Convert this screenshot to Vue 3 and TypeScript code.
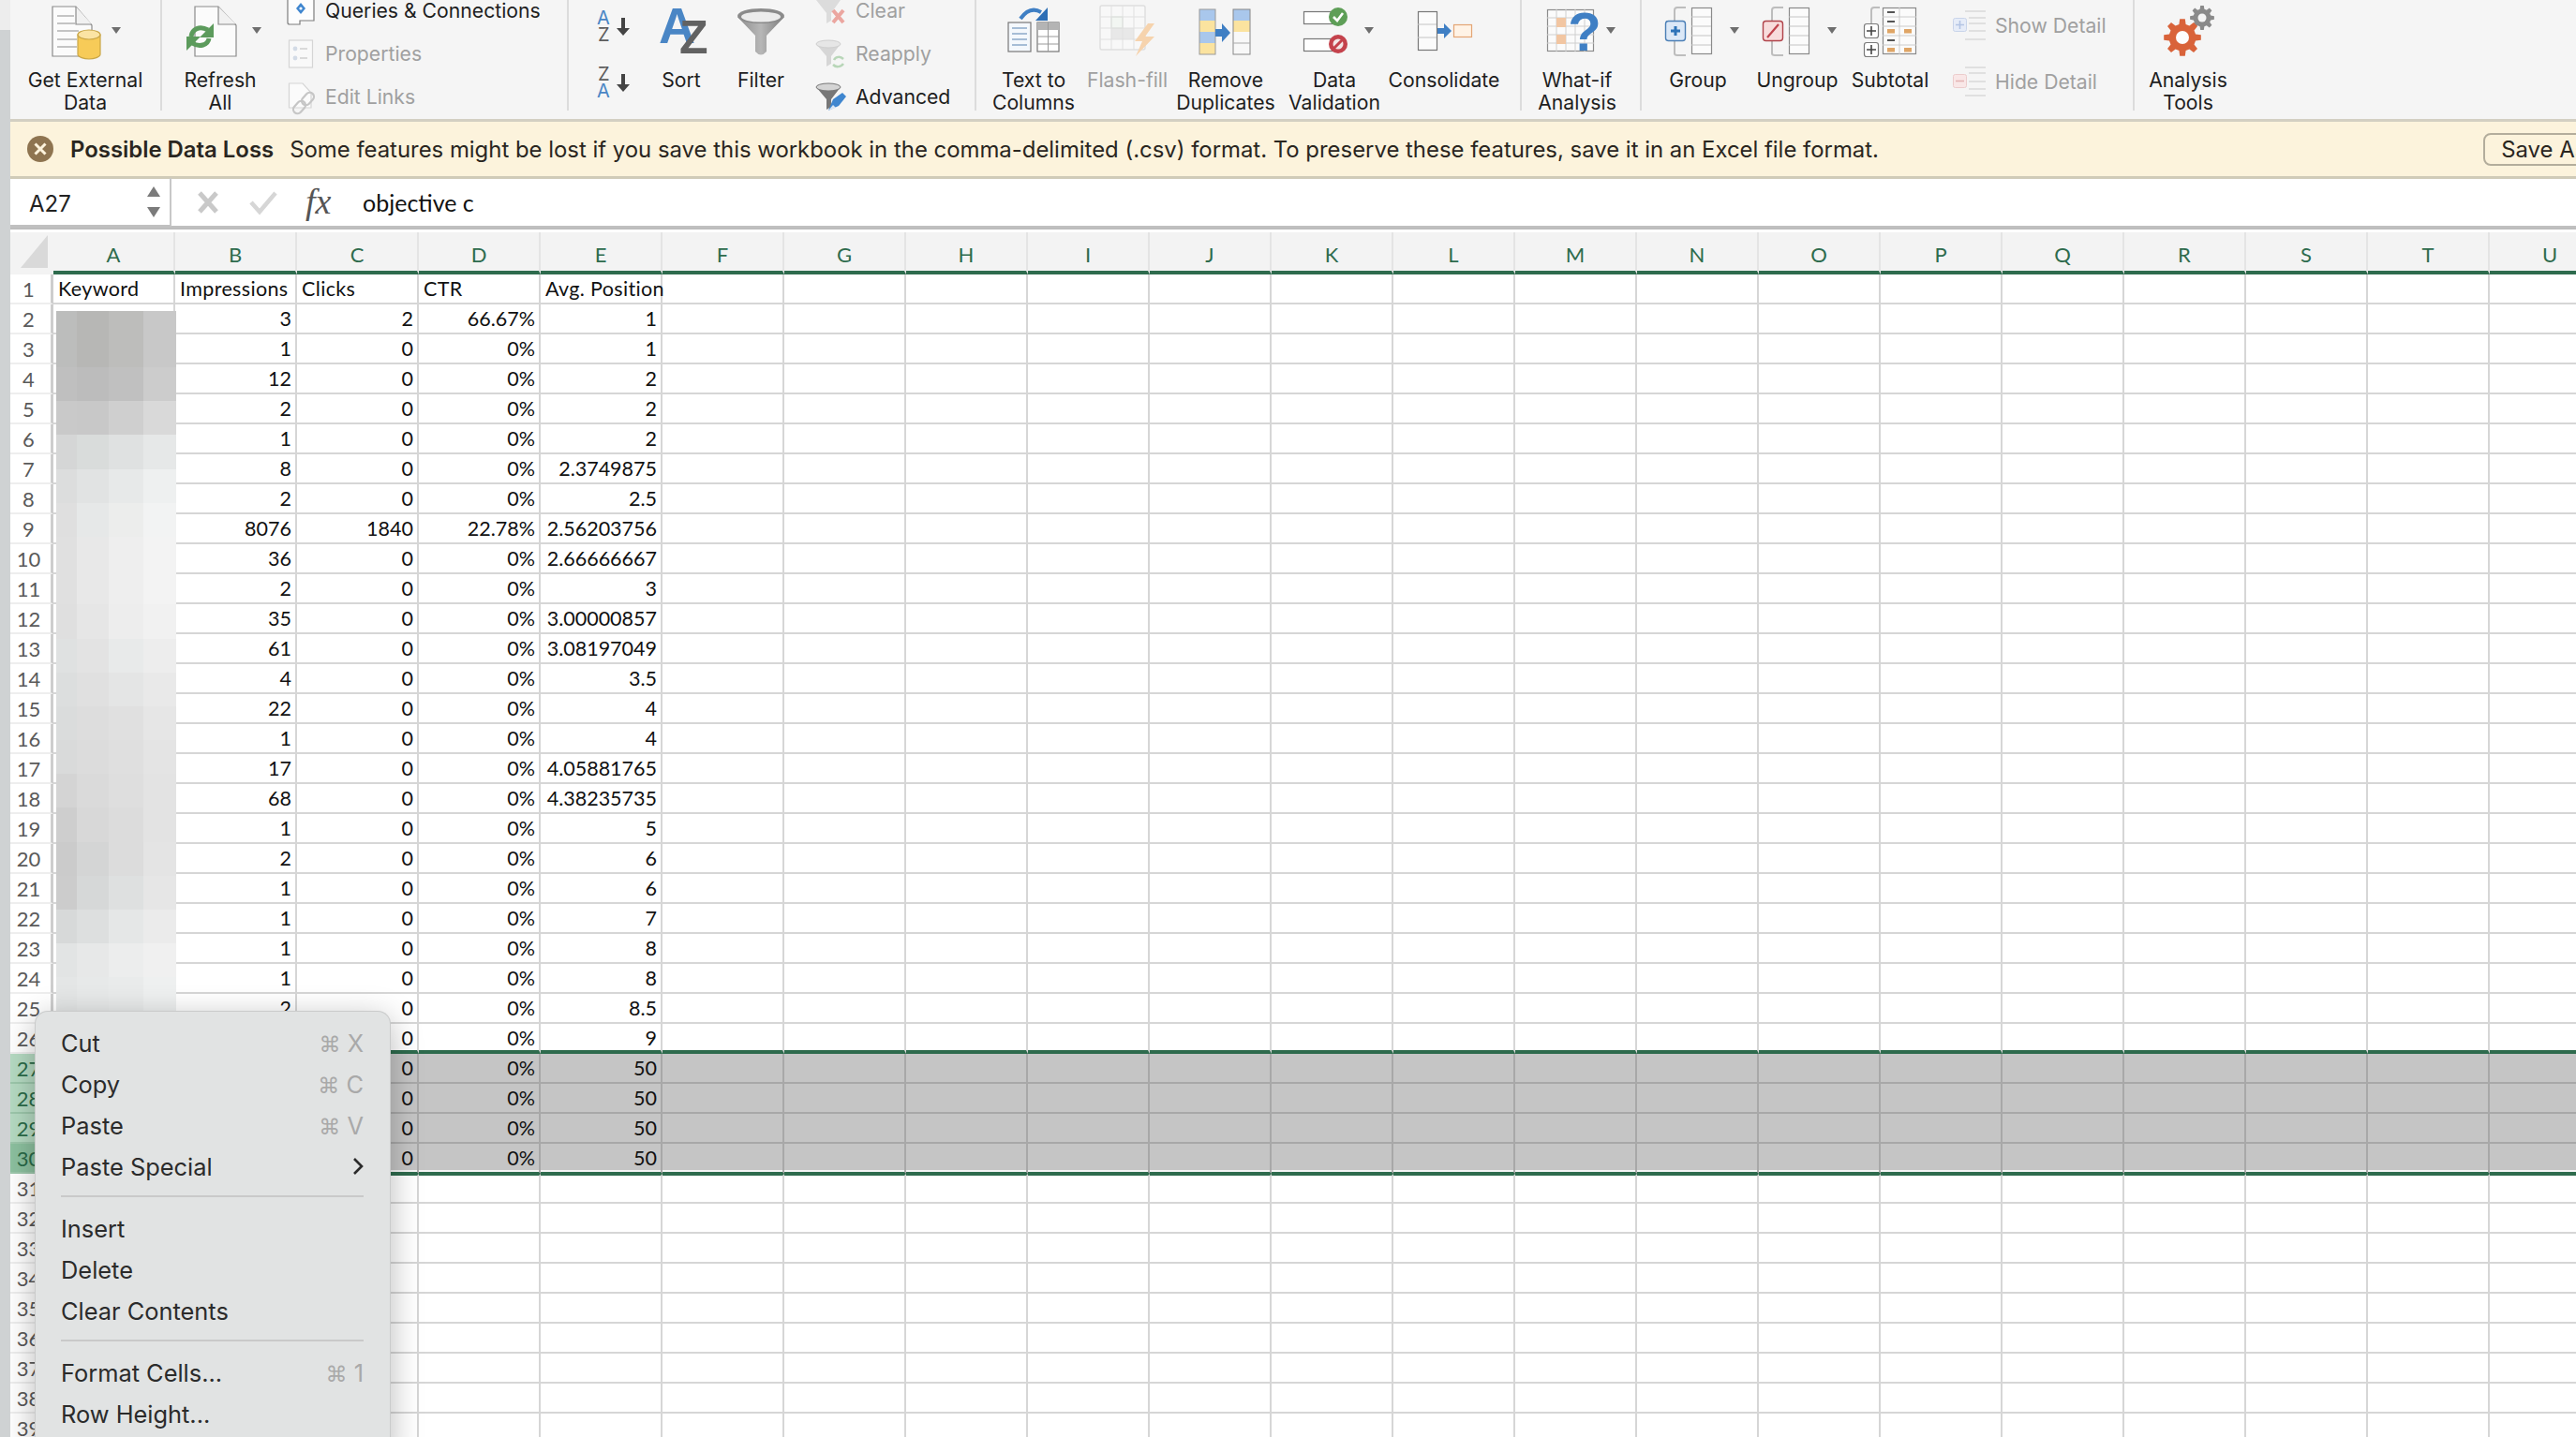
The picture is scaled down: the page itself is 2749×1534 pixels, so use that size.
<script setup lang="ts">
type Row = { n: number; cells: string[] };

const data: string[][] = [
  ['Keyword', 'Impressions', 'Clicks', 'CTR', 'Avg. Position'],
  ['', '3', '2', '66.67%', '1'],
  ['', '1', '0', '0%', '1'],
  ['', '12', '0', '0%', '2'],
  ['', '2', '0', '0%', '2'],
  ['', '1', '0', '0%', '2'],
  ['', '8', '0', '0%', '2.3749875'],
  ['', '2', '0', '0%', '2.5'],
  ['', '8076', '1840', '22.78%', '2.56203756'],
  ['', '36', '0', '0%', '2.66666667'],
  ['', '2', '0', '0%', '3'],
  ['', '35', '0', '0%', '3.00000857'],
  ['', '61', '0', '0%', '3.08197049'],
  ['', '4', '0', '0%', '3.5'],
  ['', '22', '0', '0%', '4'],
  ['', '1', '0', '0%', '4'],
  ['', '17', '0', '0%', '4.05881765'],
  ['', '68', '0', '0%', '4.38235735'],
  ['', '1', '0', '0%', '5'],
  ['', '2', '0', '0%', '6'],
  ['', '1', '0', '0%', '6'],
  ['', '1', '0', '0%', '7'],
  ['', '1', '0', '0%', '8'],
  ['', '1', '0', '0%', '8'],
  ['', '2', '0', '0%', '8.5'],
  ['', '1', '0', '0%', '9'],
  ['', '1', '0', '0%', '50'],
  ['', '1', '0', '0%', '50'],
  ['', '1', '0', '0%', '50'],
  ['', '1', '0', '0%', '50'],
];

const letters = 'ABCDEFGHIJKLMNOPQRSTU'.split('');

const rows: Row[] = Array.from({ length: 39 }, (_, i) => ({
  n: i + 1,
  cells: letters.map((_, c) => (data[i] ? data[i][c] ?? '' : '')),
}));

const blur: string[][] = [
  ['#bcbdbc', '#b7b7b5', '#bdbdbb', '#c8c8c8'],
  ['#bfbfbf', '#bcbcbc', '#c0c0c0', '#cccccc'],
  ['#c9c9c9', '#c8c8c8', '#cfcfcf', '#d9d9d9'],
  ['#d5d6d6', '#d9dcdb', '#dfe1e1', '#e6e8e8'],
  ['#dcdddd', '#e1e3e3', '#e7e9e9', '#eef0f0'],
  ['#dfdfdf', '#e6e8e8', '#ecedec', '#f2f3f3'],
  ['#e0e0e0', '#e8e8e8', '#eeeeee', '#f3f3f3'],
  ['#e0e0e0', '#e8e8e8', '#eeeeee', '#f3f3f3'],
  ['#dfdfdf', '#e6e6e6', '#ededed', '#f1f1f1'],
  ['#dfe1e1', '#e3e3e3', '#e8eaea', '#ededed'],
  ['#dcdede', '#e0e0e0', '#e4e5e5', '#e9e9e9'],
  ['#dadcdc', '#dddddd', '#e0e0e0', '#e6e6e6'],
  ['#d9dada', '#dcdcdc', '#dfdfdf', '#e4e4e4'],
  ['#d4d4d4', '#dadada', '#dedede', '#e3e3e3'],
  ['#cecece', '#d8d8d8', '#dcdcdc', '#e3e3e3'],
  ['#cbcbcb', '#d4d5d5', '#dcdcdc', '#e4e4e4'],
  ['#cccccc', '#d6d8d8', '#dee0e0', '#e6e6e6'],
  ['#d7d9d9', '#dddfdf', '#e5e7e7', '#ebebeb'],
  ['#e2e4e4', '#e7e8e8', '#eceded', '#f0f0f0'],
  ['#e4e6e6', '#e7e9e9', '#e9ebeb', '#eef0f0'],
];

type MenuItem = { label?: string; key?: string; arrow?: boolean; sep?: boolean };
const menu: MenuItem[] = [
  { label: 'Cut', key: 'X' },
  { label: 'Copy', key: 'C' },
  { label: 'Paste', key: 'V' },
  { label: 'Paste Special', arrow: true },
  { sep: true },
  { label: 'Insert' },
  { label: 'Delete' },
  { label: 'Clear Contents' },
  { sep: true },
  { label: 'Format Cells...', key: '1' },
  { label: 'Row Height...' },
];

function gear(cx: number, cy: number, ro: number, ri: number, n: number): string {
  const pts: string[] = [];
  const step = (Math.PI * 2) / n;
  for (let i = 0; i < n; i++) {
    const a = i * step - Math.PI / 2;
    const w = step * 0.2;
    const p = (r: number, t: number) => `${(cx + r * Math.cos(t)).toFixed(1)} ${(cy + r * Math.sin(t)).toFixed(1)}`;
    pts.push(p(ri, a - step * 0.32), p(ro, a - w * 0.9), p(ro, a + w * 0.9), p(ri, a + step * 0.32));
  }
  return 'M' + pts.join('L') + 'Z';
}
const gearBig = gear(2329, 40, 20, 14.5, 8);
const gearSmall = gear(2350, 19, 13, 9.5, 8);
</script>

<template>
  <div class="page">
    <div class="main">
      <!-- ribbon -->
      <div class="ribbon">
        <div class="btn w160">
          <svg class="ico" width="160" height="72" viewBox="11 0 160 72">
            <path d="M56 7H81L98 27V60H56Z" fill="#fbfbfb" stroke="#8b8b8b" stroke-width="1.2" />
            <path d="M81 7V26H98" fill="#f1f1f1" stroke="#8b8b8b" stroke-width="1.2" />
            <g stroke="#c4c4c4" stroke-width="2"><path d="M61 17H79M61 25H80M61 33H84M61 42H82M61 50H82" /></g>
            <path d="M83 37V58C83 61 90 63 95 63S107 61 107 58V37Z" fill="#f7cb58" stroke="#c9a647" stroke-width="1.2" />
            <ellipse cx="95" cy="37" rx="12" ry="5" fill="#fbe4a4" stroke="#c9a647" stroke-width="1.2" />
            <path d="M119 29H129L124 36Z" fill="#6e6e6e" />
          </svg>
          <div class="lbl">Get External<br />Data</div>
        </div>
        <div class="sep"></div>
        <div class="btn w124">
          <svg class="ico" width="124" height="72" viewBox="173 0 124 72">
            <path d="M208 7H233L252 27V60H208Z" fill="#fbfbfb" stroke="#8b8b8b" stroke-width="1.2" />
            <path d="M233 7V26H252" fill="#f1f1f1" stroke="#8b8b8b" stroke-width="1.2" />
            <path d="M204 39C205 31 213 27 222 32" fill="none" stroke="#5c9b5c" stroke-width="5" />
            <path d="M228 25V40H213Z" fill="#5c9b5c" />
            <path d="M223 41C222 48 213 51 205 46" fill="none" stroke="#5c9b5c" stroke-width="5" />
            <path d="M199 54V39H214Z" fill="#5c9b5c" />
            <path d="M269 29H279L274 36Z" fill="#6e6e6e" />
          </svg>
          <div class="lbl">Refresh<br />All</div>
        </div>
        <div class="small w308">
          <div class="srow">
            <svg width="41" height="46" viewBox="306 -12 41 46">
              <path d="M307 -6H335V22H320V26H309Q307 26 307 24Z" fill="#fdfdfd" stroke="#7d7d7d" stroke-width="1.2" />
              <path d="M321 3L326 9L321 15L316 9Z" fill="#3f86cf" />
              <circle cx="321" cy="9" r="1.6" fill="#fff" />
            </svg>
            <span>Queries &amp; Connections</span>
          </div>
          <div class="srow off">
            <svg width="41" height="46" viewBox="306 34 41 46">
              <rect x="308.5" y="43" width="25" height="29" fill="#f9f9f9" stroke="#d5d5d5" stroke-width="1.2" />
              <g fill="#d3dbe6"><circle cx="315" cy="52" r="2.4" /><circle cx="315" cy="62" r="2.4" /></g>
              <path d="M320 52H328M320 62H328" stroke="#cfcfcf" stroke-width="1.6" />
            </svg>
            <span>Properties</span>
          </div>
          <div class="srow off">
            <svg width="41" height="46" viewBox="306 80 41 46">
              <path d="M308.5 89H323L332 99V115H308.5Z" fill="#fbfbfb" stroke="#d5d5d5" stroke-width="1.2" />
              <g fill="none" stroke="#c6c6c6" stroke-width="2.2">
                <rect x="315" y="107" width="9" height="15" rx="4.5" transform="rotate(42 319.500 114.500)" />
                <rect x="324" y="98" width="9" height="15" rx="4.5" transform="rotate(42 328.500 105.500)" />
              </g>
            </svg>
            <span>Edit Links</span>
          </div>
        </div>
        <div class="sep"></div>
        <svg class="azcol" width="72" height="118" viewBox="607 0 72 118">
          <text x="637" y="26" class="az blue">A</text>
          <text x="638" y="44" class="az dark">Z</text>
          <path d="M663 19H667V30H672L665 38L658 30H663Z" fill="#444" />
          <text x="638" y="86" class="az dark">Z</text>
          <text x="637" y="104" class="az blue">A</text>
          <path d="M663 79H667V90H672L665 98L658 90H663Z" fill="#444" />
        </svg>
        <div class="btn w96">
          <svg class="ico" width="96" height="72" viewBox="679 0 96 72">
            <text x="703" y="46" class="sortA">A</text>
            <text x="725" y="57" class="sortZ">Z</text>
          </svg>
          <div class="lbl">Sort</div>
        </div>
        <div class="btn w74">
          <svg class="ico" width="74" height="72" viewBox="775 0 74 72">
            <defs>
              <linearGradient id="fun" x1="0" x2="1" y1="0" y2="0">
                <stop offset="0" stop-color="#8d8d8d" />
                <stop offset="0.5" stop-color="#b7b7b7" />
                <stop offset="1" stop-color="#7b7b7b" />
              </linearGradient>
            </defs>
            <path d="M787 18L806 38V55Q812 62 818 55V38L837 18Z" fill="url(#fun)" />
            <ellipse cx="812" cy="17" rx="25" ry="8" fill="#8b8b8b" />
            <ellipse cx="812" cy="18" rx="21" ry="5.5" fill="#ececec" />
          </svg>
          <div class="lbl">Filter</div>
        </div>
        <div class="small w191">
          <div class="srow off">
            <svg width="45" height="46" viewBox="868 -12 45 46">
              <path d="M871 0L882 14V25L887 22V14L897 0Z" fill="#dcdcdc" />
              <path d="M889 11L900 24M900 11L889 24" stroke="#eba6a0" stroke-width="4" />
            </svg>
            <span>Clear</span>
          </div>
          <div class="srow off">
            <svg width="45" height="46" viewBox="868 34 45 46">
              <path d="M871 47L882 60V71L887 68V60L897 47Z" fill="#d6d6d6" />
              <ellipse cx="884" cy="47" rx="13" ry="4" fill="#e6e6e6" stroke="#cfcfcf" />
              <path d="M890 64C892 60 897 60 900 63M900 68C897 72 892 72 889 69" fill="none" stroke="#b8d6b8" stroke-width="2.5" />
            </svg>
            <span>Reapply</span>
          </div>
          <div class="srow">
            <svg width="45" height="46" viewBox="868 80 45 46">
              <path d="M871 93L882 106V117L887 114V106L897 93Z" fill="#777" />
              <ellipse cx="884" cy="93" rx="13" ry="4" fill="#d4d4d4" stroke="#777" />
              <path d="M884 118L889 106L899 99L903 103L895 113Z" fill="#3f86cf" />
              <path d="M884 118L889 112L892 115Z" fill="#dbe6f3" />
            </svg>
            <span>Advanced</span>
          </div>
        </div>
        <div class="sep"></div>
        <div class="btn w122">
          <svg class="ico" width="122" height="72" viewBox="1042 0 122 72">
            <path d="M1089 20Q1099 6 1111 13" fill="none" stroke="#3f7fc4" stroke-width="4" />
            <path d="M1118 8V22H1105Z" fill="#2e6fb5" />
            <rect x="1076" y="24" width="24" height="31" fill="#f4f8fc" stroke="#777" stroke-width="1.2" />
            <path d="M1080 30H1096M1080 36H1096M1080 42H1096M1080 48H1096" stroke="#a6bdd6" stroke-width="2" />
            <rect x="1107" y="24" width="23" height="31" fill="#fff" stroke="#777" stroke-width="1.2" />
            <rect x="1107" y="24" width="23" height="8" fill="#b4b4b4" />
            <path d="M1107 39H1130M1107 47H1130M1118.500 24V55" stroke="#999" />
          </svg>
          <div class="lbl">Text to<br />Columns</div>
        </div>
        <div class="btn w78">
          <svg class="ico" width="78" height="72" viewBox="1164 0 78 72">
            <rect x="1174" y="6" width="48" height="47" rx="2" fill="#f8f8f8" stroke="#dedede" stroke-width="1.4" />
            <rect x="1186" y="30" width="24" height="12" fill="#e8e8e8" />
            <rect x="1186" y="18" width="12" height="12" fill="#f2f6f2" stroke="#d8e2d8" />
            <path d="M1186 6V53M1198 6V53M1210 6V53M1174 18H1222M1174 30H1222M1174 42H1222" stroke="#e0e0e0" fill="none" />
            <path d="M1225 25L1211 44H1219L1212 60L1232 39H1222L1232 25Z" fill="#f6d3ad" />
          </svg>
          <div class="lbl off">Flash-fill</div>
        </div>
        <div class="btn w132">
          <svg class="ico" width="132" height="72" viewBox="1242 0 132 72">
            <rect x="1280" y="10" width="17" height="12" fill="#a9c7ec" />
            <rect x="1280" y="22" width="17" height="12" fill="#fbe39f" />
            <rect x="1280" y="34" width="17" height="12" fill="#a9c7ec" />
            <rect x="1280" y="46" width="17" height="12" fill="#fbe39f" />
            <rect x="1280" y="10" width="17" height="48" fill="none" stroke="#9a9a9a" />
            <rect x="1316" y="10" width="18" height="12" fill="#a9c7ec" />
            <rect x="1316" y="22" width="18" height="12" fill="#fbe39f" />
            <rect x="1316" y="34" width="18" height="12" fill="#f8f8f8" />
            <rect x="1316" y="46" width="18" height="12" fill="#f8f8f8" />
            <rect x="1316" y="10" width="18" height="48" fill="none" stroke="#888" />
            <path d="M1316 46H1334" stroke="#aaa" />
            <path d="M1297 31H1304V25L1313 35L1304 45V39H1297Z" fill="#3f7fc4" />
          </svg>
          <div class="lbl">Remove<br />Duplicates</div>
        </div>
        <div class="btn w100">
          <svg class="ico" width="100" height="72" viewBox="1374 0 100 72">
            <rect x="1391.500" y="12.500" width="32" height="13" fill="#fff" stroke="#777" stroke-width="1.2" />
            <rect x="1391.500" y="41.500" width="32" height="13" fill="#fff" stroke="#777" stroke-width="1.2" />
            <circle cx="1428" cy="18" r="10" fill="#5e9e57" />
            <path d="M1423 18L1427 22L1433 14" fill="none" stroke="#fff" stroke-width="2.6" />
            <circle cx="1428" cy="47" r="10" fill="#c4424c" />
            <circle cx="1428" cy="47" r="5.500" fill="#f3e6e6" />
            <path d="M1423 52L1433 42" stroke="#c4424c" stroke-width="3" />
            <path d="M1456 29H1466L1461 36Z" fill="#6e6e6e" />
          </svg>
          <div class="lbl">Data<br />Validation</div>
        </div>
        <div class="btn w134">
          <svg class="ico" width="134" height="72" viewBox="1474 0 134 72">
            <rect x="1513.500" y="12.500" width="20" height="41" fill="#fbfbfb" stroke="#777" stroke-width="1.2" />
            <path d="M1513 26H1533M1513 40H1533" stroke="#c4c4c4" />
            <path d="M1534 30H1541V25L1549 33L1541 41V36H1534Z" fill="#3f7fc4" />
            <rect x="1551.500" y="26.500" width="19" height="13" fill="#fff3e6" stroke="#e3a574" stroke-width="1.2" />
          </svg>
          <div class="lbl">Consolidate</div>
        </div>
        <div class="sep mlsep"></div>
        <div class="btn w118">
          <svg class="ico" width="118" height="72" viewBox="1624 0 118 72">
            <rect x="1651.500" y="10.500" width="49" height="44" fill="#fbfbfb" stroke="#8c8c8c" stroke-width="1.2" />
            <path d="M1661 10V55M1671 10V55M1681 10V55M1691 10V55M1651 19H1701M1651 28H1701M1651 37H1701M1651 46H1701" stroke="#cfcfcf" />
            <rect x="1661" y="19" width="10" height="10" fill="#f2c6a2" />
            <rect x="1661" y="37" width="10" height="10" fill="#f2c6a2" />
            <text x="1691" y="54" class="qmark">?</text>
            <path d="M1714 29H1724L1719 36Z" fill="#6e6e6e" />
          </svg>
          <div class="lbl">What-if<br />Analysis</div>
        </div>
        <div class="sep mlsep2"></div>
        <div class="btn w120">
          <svg class="ico" width="120" height="72" viewBox="1752 0 120 72">
            <path d="M1799 8H1790Q1787 8 1787 11V57Q1787 59 1790 59H1799" fill="none" stroke="#bdbdbd" stroke-width="2" />
            <rect x="1777.500" y="22.500" width="21" height="21" rx="3" fill="#dbe8f7" stroke="#4b7fb6" stroke-width="1.4" />
            <path d="M1783 33H1793M1788 28V38" stroke="#2d73b8" stroke-width="3" />
            <rect x="1805.500" y="8.500" width="21" height="49" fill="#fbfbfb" stroke="#8a8a8a" stroke-width="1.2" />
            <path d="M1805 18H1826M1805 28H1826M1805 38H1826M1805 48H1826" stroke="#c4c4c4" />
            <path d="M1846 29H1856L1851 36Z" fill="#6e6e6e" />
          </svg>
          <div class="lbl">Group</div>
        </div>
        <div class="btn w92">
          <svg class="ico" width="92" height="72" viewBox="1872 0 92 72">
            <path d="M1903 8H1894Q1891 8 1891 11V57Q1891 59 1894 59H1903" fill="none" stroke="#bdbdbd" stroke-width="2" />
            <rect x="1881.500" y="22.500" width="21" height="21" rx="3" fill="#f8dcdc" stroke="#b0434a" stroke-width="1.4" />
            <path d="M1886 40L1898 26" stroke="#c0434c" stroke-width="2.2" />
            <rect x="1909.500" y="8.500" width="21" height="49" fill="#fbfbfb" stroke="#8a8a8a" stroke-width="1.2" />
            <path d="M1909 18H1930M1909 28H1930M1909 38H1930M1909 48H1930" stroke="#c4c4c4" />
            <path d="M1950 29H1960L1955 36Z" fill="#6e6e6e" />
          </svg>
          <div class="lbl">Ungroup</div>
        </div>
        <div class="btn w106">
          <svg class="ico" width="106" height="72" viewBox="1964 0 106 72">
            <path d="M2006 8H2000Q1997 8 1997 11V25" fill="none" stroke="#bdbdbd" stroke-width="2" />
            <rect x="1989.500" y="25.500" width="15" height="15" rx="2.500" fill="#fff" stroke="#7a7a7a" stroke-width="1.2" />
            <rect x="1989.500" y="45.500" width="15" height="15" rx="2.500" fill="#fff" stroke="#7a7a7a" stroke-width="1.2" />
            <path d="M1992 33H2002M1997 28V38M1992 53H2002M1997 48V58" stroke="#444" stroke-width="1.6" />
            <rect x="2009.500" y="8.500" width="35" height="49" fill="#fbfbfb" stroke="#8a8a8a" stroke-width="1.2" />
            <path d="M2027 8V58M2009 18H2045M2009 28H2045M2009 38H2045M2009 48H2045" stroke="#cccccc" />
            <path d="M2014 13H2022M2014 23H2022M2014 43H2022" stroke="#555" stroke-width="2" />
            <g fill="#dfa566">
              <rect x="2014" y="31" width="8" height="4.500" /><rect x="2032" y="31" width="8" height="4.500" />
              <rect x="2014" y="51" width="8" height="4.500" /><rect x="2032" y="51" width="8" height="4.500" />
            </g>
          </svg>
          <div class="lbl">Subtotal</div>
        </div>
        <div class="small detail">
          <div class="srow off">
            <svg width="47" height="60" viewBox="2082 -3 47 60">
              <path d="M2097 12H2119M2101 19H2119M2101 25H2119M2101 33H2119M2097 42H2119" stroke="#e0e0e0" stroke-width="2.2" />
              <rect x="2084.500" y="19.500" width="14" height="14" rx="2" fill="#e6ecf8" stroke="#c9d4ea" />
              <path d="M2087 26.500H2096M2091.500 22V31" stroke="#b3c4e4" stroke-width="1.6" />
            </svg>
            <span>Show Detail</span>
          </div>
          <div class="srow off">
            <svg width="47" height="60" viewBox="2082 57 47 60">
              <path d="M2097 72H2119M2101 78H2119M2101 87H2119M2101 95H2119M2097 102H2119" stroke="#e0e0e0" stroke-width="2.2" />
              <rect x="2084.500" y="79.500" width="14" height="14" rx="2" fill="#f9e7e7" stroke="#eccccc" />
              <path d="M2087 86.500H2096" stroke="#e3b5b5" stroke-width="1.6" />
            </svg>
            <span>Hide Detail</span>
          </div>
        </div>
        <div class="sep"></div>
        <div class="btn w114">
          <svg class="ico" width="114" height="72" viewBox="2278 0 114 72">
            <path :d="gearSmall" fill="#8a8a8a" />
            <circle cx="2350" cy="19" r="4.500" fill="#f5f5f5" />
            <path :d="gearBig" fill="#d9633a" />
            <circle cx="2329" cy="40" r="7" fill="#fdfdfd" />
          </svg>
          <div class="lbl">Analysis<br />Tools</div>
        </div>
      </div>

      <!-- banner -->
      <div class="banner">
        <svg class="bicon" width="28" height="28" viewBox="0 0 28 28">
          <circle cx="14" cy="14" r="14" fill="#8e7450" />
          <path d="M8.500 8.500L19.500 19.500M19.500 8.500L8.500 19.500" stroke="#fdf3dc" stroke-width="3" />
        </svg>
        <span class="btitle">Possible Data Loss</span>
        <span class="bmsg">Some features might be lost if you save this workbook in the comma-delimited (.csv) format. To preserve these features, save it in an Excel file format.</span>
        <span class="bbtn">Save As</span>
      </div>

      <!-- formula bar -->
      <div class="fbar">
        <div class="namebox">
          <span class="nametext">A27</span>
          <div class="spin">
            <svg width="14" height="33" viewBox="0 0 14 33">
              <path d="M7 0L14 11H0Z" fill="#7b7b7b" />
              <path d="M7 33L14 22H0Z" fill="#7b7b7b" />
            </svg>
          </div>
        </div>
        <svg class="ftools" width="180" height="52" viewBox="183 192 180 52">
          <path d="M213 208L231 228M231 208L213 228" stroke="#c9c9c9" stroke-width="5" />
          <path d="M268 218L277 228L294 208" stroke="#d6d6d6" stroke-width="4.500" fill="none" />
          <text x="326" y="230" class="fx">fx</text>
          <path d="M372 204V233" stroke="#e2e2e2" stroke-width="2" />
        </svg>
        <span class="ftext">objective c</span>
      </div>

      <!-- sheet -->
      <div class="sheet">
        <div class="hrow">
          <div class="corner">
            <svg width="46" height="45" viewBox="0 0 46 45">
              <path d="M40 3V38H11Z" fill="#d9d9d9" />
            </svg>
          </div>
          <div v-for="l in letters" :key="l" class="colh">{{ l }}</div>
        </div>
        <div
          v-for="r in rows"
          :key="r.n"
          class="row"
          :class="{ sel: r.n >= 27 && r.n <= 30, above: r.n === 26, last: r.n === 30, below: r.n === 31 }"
        >
          <div class="rowh">{{ r.n }}</div>
          <div
            v-for="(c, i) in r.cells"
            :key="i"
            class="cell"
            :class="{ num: r.n > 1, txt: r.n === 1 }"
          >{{ c }}</div>
        </div>

        <div class="redact">
          <div v-for="(b, i) in blur" :key="i" class="bl" :class="{ first: i === 0 }">
            <div v-for="(c, j) in b" :key="j" class="bc" :class="'bc' + j" :style="{ background: c }"></div>
          </div>
          <div class="specks"></div>
        </div>

        <div class="menu">
          <template v-for="(m, i) in menu" :key="i">
            <div v-if="m.sep" class="msep"></div>
            <div v-else class="mitem">
              <span>{{ m.label }}</span>
              <span v-if="m.key" class="mkey"><i>⌘</i> {{ m.key }}</span>
              <svg v-if="m.arrow" width="12" height="20" viewBox="0 0 12 20">
                <path d="M2 2L10 10L2 18" fill="none" stroke="#2b2b2b" stroke-width="2.600" />
              </svg>
            </div>
          </template>
        </div>
      </div>
    </div>
  </div>
</template>

<style>
html, body { margin: 0; padding: 0; background: #fff; }
</style>

<style scoped>
.page {
  width: 2749px;
  height: 1534px;
  overflow: hidden;
  padding-left: 11px;
  box-sizing: border-box;
  background: linear-gradient(#ededed 0, #ededed 32px, #cfd2d3 32px);
  font-family: "Inter", "Liberation Sans", sans-serif;
  color: #222;
}
.main { width: 2738px; height: 1534px; background: #fff; position: relative; overflow: hidden; }

.ribbon { display: flex; height: 127px; background: #f5f5f5; overflow: hidden; }
.sep { flex: none; width: 2px; height: 118px; background: #dcdcdc; }
.mlsep { margin-left: 14px; }
.mlsep2 { margin-left: 8px; }
.btn { flex: none; display: flex; flex-direction: column; align-items: center; }
.ico { display: block; flex: none; margin-bottom: 1px; }
.lbl { font-size: 21.200px; line-height: 24px; text-align: center; white-space: nowrap; color: #1e1e1e; }
.lbl.off { color: #a0a0a0; }
.w160 { width: 160px; } .w124 { width: 124px; } .w96 { width: 96px; } .w74 { width: 74px; }
.w122 { width: 122px; } .w78 { width: 78px; } .w132 { width: 132px; } .w100 { width: 100px; }
.w134 { width: 134px; } .w118 { width: 118px; } .w120 { width: 120px; } .w92 { width: 92px; }
.w106 { width: 106px; } .w114 { width: 114px; }
.azcol { flex: none; }
.small { flex: none; box-sizing: border-box; margin-top: -12px; }
.w308 { width: 308px; padding-left: 9px; }
.w191 { width: 191px; padding-left: 19px; }
.detail { width: 206px; padding-left: 12px; margin-top: -3px; }
.srow { display: flex; align-items: center; height: 46px; font-size: 21.200px; white-space: nowrap; color: #1e1e1e; }
.detail .srow { height: 60px; }
.srow svg { flex: none; display: block; }
.srow.off { color: #a0a0a0; }
.az { font-size: 20px; font-family: "Inter", sans-serif; }
.blue { fill: #4a86c5; }
.dark { fill: #5c5c5c; }
.sortA { font-size: 54px; font-family: "Liberation Sans", sans-serif; font-weight: 700; fill: #4a86c5; }
.sortZ { font-size: 50px; font-family: "Liberation Sans", sans-serif; font-weight: 700; fill: #626262; }
.qmark { font-size: 58px; font-weight: 800; font-family: "Liberation Sans", sans-serif; fill: #3f7fc4; text-anchor: middle; }
.fx { font-size: 38px; font-style: italic; font-family: "Liberation Serif", serif; fill: #555; }

.banner {
  display: flex; align-items: center; box-sizing: border-box; height: 64px;
  background: #fcf3dc; border-top: 3px solid #d3cfc2; border-bottom: 3px solid #d0cbb8;
  padding-left: 18px; white-space: nowrap; font-size: 23.900px; color: #2a261f;
}
.bicon { flex: none; margin-right: 18px; }
.btitle { font-weight: 600; margin-right: 17px; }
.bmsg { flex: none; width: 2341px; }
.bbtn {
  flex: none; box-sizing: border-box; width: 130px; height: 35px; line-height: 31px;
  border: 2px solid #b3ad9c; border-radius: 8px; padding-left: 17px;
}

.fbar { display: flex; align-items: center; height: 52px; background: #fff; border-bottom: 2px solid #c0c0c0; box-sizing: border-box; position: relative; }
.namebox {
  flex: none; width: 172px; height: 52px; box-sizing: border-box; display: flex; align-items: center;
  justify-content: space-between; padding: 0 10px 0 20px; border-right: 2px solid #c8c8c8; border-bottom: 2px solid #c0c0c0;
  font-size: 24px; color: #222;
}
.nametext { padding-top: 4px; }
.spin { display: flex; }
.ftools { flex: none; display: block; }
.ftext { font-family: "Lato", sans-serif; font-size: 25px; margin-left: 24px; color: #111; }

.sheet { position: relative; border-top: 2px solid #bdbdbd; padding-top: 3px; }
.hrow { display: flex; height: 45px; background: #f3f3f3; }
.corner { flex: none; width: 46px; height: 45px; box-sizing: border-box; }
.corner svg { display: block; }
.colh {
  flex: none; width: 130px; height: 45px; box-sizing: border-box; text-align: center;
  font-family: "Lato", sans-serif; font-size: 22px; line-height: 48px; color: #2e6b4d;
  border-right: 2px solid #e4e4e4; border-bottom: 4px solid #2e6b4d;
}
.row { display: flex; height: 32px; }
.rowh {
  flex: none; width: 46px; height: 32px; box-sizing: border-box; text-align: center;
  font-family: "Lato", sans-serif; font-size: 22px; line-height: 31px; color: #5a5a5a; background: #fff;
  border-right: 3px solid #cdcdcd; border-bottom: 2px solid #eeeeee; padding-right: 4px;
}
.cell {
  flex: none; width: 130px; height: 32px; box-sizing: border-box; white-space: nowrap;
  font-family: "Lato", sans-serif; font-size: 21.500px; line-height: 31px; color: #111;
  border-right: 2px solid #d6d6d6; border-bottom: 2px solid #d6d6d6;
}
.cell.num { text-align: right; padding-right: 4px; }
.cell.txt { padding-left: 5px; letter-spacing: 0.35px; }
.row.above .cell { border-bottom: 4px solid #2e6b4d; }
.row.sel .cell { background: #c5c5c5; border-right-color: #a8a8a8; border-bottom-color: #a8a8a8; }
.row.last .cell { border-bottom: 2px solid #2e6b4d; box-shadow: inset 0 -2px 0 #f5f5f5; }
.row.below .cell { border-top: 2px solid #2e6b4d; }
.row.sel .rowh { background: #b5dac2; color: #2a6a48; border-right-color: #7fb493; border-bottom-color: #9cc7ab; }
.row.last .rowh { background: #8cc09f; }

.redact { position: absolute; left: 49px; top: 87px; width: 128px; }
.bl { display: flex; height: 36.200px; }
.bl.first { height: 60px; }
.bc { height: 100%; flex: none; }
.bc0 { width: 22px; } .bc1 { width: 34px; } .bc2 { width: 37px; } .bc3 { width: 35px; }
.specks {
  height: 2px; margin-left: 3px; width: 124px;
  background: repeating-linear-gradient(90deg, #555 0 3px, transparent 3px 6px, #444 6px 8px, transparent 8px 15px);
}

.menu {
  position: absolute; left: 26px; top: 834px; width: 380px; height: 480px; box-sizing: border-box;
  padding: 11px 28px 0 27px; background: #e1e3e3; border-radius: 14px;
  border: 1px solid rgba(0, 0, 0, 0.1);
  box-shadow: 0 8px 34px rgba(0, 0, 0, 0.28);
  font-size: 25.400px; color: #2b2b2b;
}
.mitem { display: flex; align-items: center; justify-content: space-between; height: 44px; white-space: nowrap; }
.mkey { color: #a9a9a9; font-size: 25.400px; }
.mkey i { font-style: normal; font-family: "DejaVu Sans", sans-serif; font-size: 23px; }
.msep { height: 2px; background: #c9c9c9; margin: 9px 0 11px; }
</style>
